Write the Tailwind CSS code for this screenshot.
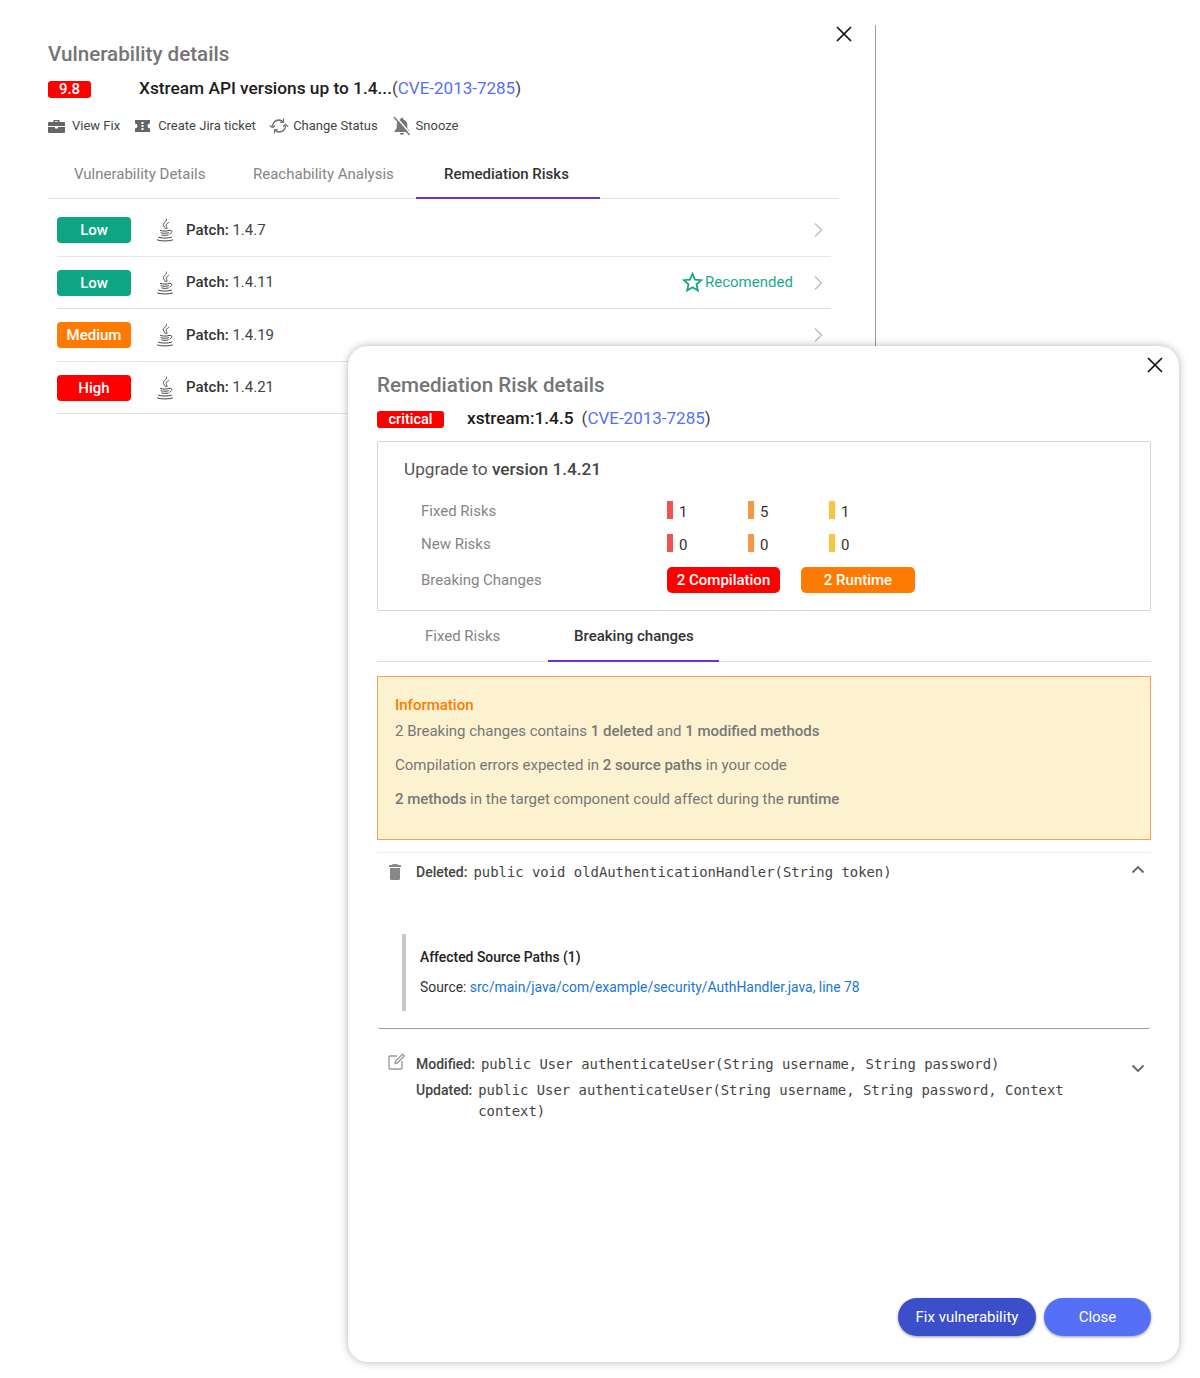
<!DOCTYPE html>
<html lang="en">
<head>
<meta charset="UTF-8">
<title>Remediation Risk details</title>
<script src="https://cdn.jsdelivr.net/npm/@tailwindcss/browser@4"></script>
</head>
<body class="bg-white font-['Roboto',sans-serif]">
<svg class="hidden">
  <symbol id="java" viewBox="4 0 16 24">
    <g fill="none" stroke="#444" stroke-width="1" stroke-linecap="round">
      <path d="M13.500 1c1 2.500-4 4-3 6.500.4 1 1.500 1.700 1.800 3"/>
      <path d="M15.500 4.500c-2 1.200-3 2.600-2 4 .4.600.6 1.300.3 2.200"/>
      <path d="M7.500 12.500c2.500.8 6.500.8 8.500 0M8 14.800c2 .6 5.500.6 7.500 0M8.800 17c2 .5 4.400.5 6.400 0"/>
      <path d="M16.500 12.500c2.800-.8 3.500 1.800 .3 3.500"/>
      <path d="M5.500 19.200c3 1.200 10 1.200 13 0M4.500 22c4 1.300 11 1.300 15 0"/>
    </g>
  </symbol>
</svg>
<div class="relative w-[1200px] h-[1378px] overflow-hidden bg-white">

  <!-- back panel -->
  <div class="relative w-[876px] h-[700px] mt-[25px] border-r border-[#9a9a9a] pl-[48px] pt-[17px]">
    <button class="absolute left-[835px] top-[0px] text-[#111]">
      <svg class="w-[18px] h-[18px]" viewBox="0 0 18 18" fill="none" stroke="currentColor" stroke-width="1.700"><path d="M2 2l14 14M16 2L2 16"/></svg>
    </button>
    <h2 class="text-[20.600px] leading-[24px] font-medium text-[#757575]">Vulnerability details</h2>
    <div class="flex items-center mt-[11px] h-[24px]">
      <span class="w-[43px] h-[17px] rounded-[3px] bg-[#ff0000] text-white text-[15px] leading-[17px] font-medium text-center">9.8</span>
      <span class="ml-[48px] text-[17.300px] font-medium text-[#1c1c1c]">Xstream API versions up to 1.4...</span>
      <span class="text-[17px] text-[#444]">(<span class="text-[#5570f6]">CVE-2013-7285</span>)</span>
    </div>
    <div class="flex items-center mt-[13px] h-[24px] text-[13px] text-[#444] whitespace-nowrap">
      <svg class="w-[17px] h-[14px] mr-[7px]" viewBox="0 0 17 14" fill="#666"><path d="M5.500 3V1h6v2h4.500a1 1 0 0 1 1 1v3H0V4a1 1 0 0 1 1-1zM7 3h3V2.200H7zM0 8h7v1.500h3V8h7v5a1 1 0 0 1-1 1H1a1 1 0 0 1-1-1z"/></svg>
      <span>View Fix</span>
      <svg class="w-[17px] h-[14px] ml-[14px] mr-[7px]" viewBox="0 0 17 14" fill="#666"><path d="M1 1h15v3.500a2.500 2.500 0 0 0 0 5V13H1V9.500a2.500 2.500 0 0 0 0-5zM7.500 3v2h2V3zm0 3v2h2V6zm0 3v2h2V9z" fill-rule="evenodd"/></svg>
      <span class="w-[97px]">Create Jira ticket</span>
      <svg class="w-[20px] h-[18px] ml-[14px] mr-[4px]" viewBox="0 0 20 18" fill="none" stroke="#666" stroke-width="1.300"><path d="M3.500 9c.2-3.500 3-6 6.300-6 1.700 0 3 .6 4.200 1.800M16.500 9c-.2 3.500-3 6-6.300 6-1.700 0-3-.6-4.200-1.800"/><path d="M14.500 1.500v3.800h-3.500M5.500 16.500v-3.800H9M.8 8.500l2.700 2 2.500-2M19.200 9.500l-2.700-2-2.500 2" stroke-width="1.100"/></svg>
      <span>Change Status</span>
      <svg class="w-[18px] h-[20px] ml-[15px] mr-[5px]" viewBox="0 0 18 20" fill="#777"><path d="M9 1.500c.8 0 1.300.6 1.300 1.300v.6c2.500.7 4 2.800 4 5.400v3.500L16.500 15v1h-15v-1l2.200-2.700V8.800c0-1.200.3-2.300 1-3.300zM7 17h4a2 2 0 0 1-4 0z"/><path d="M2.200 0l15.500 18" stroke="#fff" stroke-width="1.500"/><path d="M1 1l15.500 18" stroke="#777" stroke-width="1.400"/></svg>
      <span>Snooze</span>
    </div>
    <div class="flex w-[791px] h-[49px] mt-[12px] border-b border-[#e0e0e0] text-[15px]">
      <div class="w-[183px] pl-[26px] pt-[13px] text-[#858585]">Vulnerability Details</div>
      <div class="w-[185px] pl-[22px] pt-[13px] text-[#858585]">Reachability Analysis</div>
      <div class="w-[184px] h-[49px] border-b-2 border-[#6d2fd8] pl-[28px] pt-[13px] font-medium text-[#333]">Remediation Risks</div>
    </div>
    <div class="ml-[9px] w-[774px] mt-[5px] text-[15px] text-[#444]">
      <div class="flex items-center h-[53px] border-b border-[#e6e6e6]">
        <span class="w-[74px] h-[26px] rounded-[4px] bg-[#0ea585] text-white text-[15px] leading-[26px] font-medium text-center">Low</span>
        <svg class="w-[18px] h-[24px] ml-[25px]"><use href="#java"/></svg>
        <span class="ml-[12px]"><b class="font-medium text-[#333]">Patch:</b> 1.4.7</span>
        <svg class="w-[10px] h-[16px] ml-auto mr-[8px]" viewBox="0 0 10 16" fill="none" stroke="#bdbdbd" stroke-width="1.400"><path d="M2 1.500l6.500 6.500L2 14.500"/></svg>
      </div>
      <div class="flex items-center h-[52px] border-b border-[#e0e0e0]">
        <span class="w-[74px] h-[26px] rounded-[4px] bg-[#0ea585] text-white text-[15px] leading-[26px] font-medium text-center">Low</span>
        <svg class="w-[18px] h-[24px] ml-[25px]"><use href="#java"/></svg>
        <span class="ml-[12px]"><b class="font-medium text-[#333]">Patch:</b> 1.4.11</span>
        <svg class="w-[21px] h-[20px] ml-auto mr-[2px] -mt-[1px]" viewBox="0 0 24 23" fill="none" stroke="#0ea585" stroke-width="2"><path d="M12 2l2.900 6.700 7.100.7-5.400 4.800 1.600 7.100-6.200-3.700-6.200 3.700 1.600-7.100L2 9.400l7.100-.7z"/></svg>
        <span class="text-[#17ab8c] w-[87px] text-right">Recomended</span>
        <svg class="w-[10px] h-[16px] ml-[21px] mr-[8px]" viewBox="0 0 10 16" fill="none" stroke="#bdbdbd" stroke-width="1.400"><path d="M2 1.500l6.500 6.500L2 14.500"/></svg>
      </div>
      <div class="flex items-center h-[53px] border-b border-[#e6e6e6]">
        <span class="w-[74px] h-[26px] rounded-[4px] bg-[#ff7a00] text-white text-[15px] leading-[26px] font-medium text-center">Medium</span>
        <svg class="w-[18px] h-[24px] ml-[25px]"><use href="#java"/></svg>
        <span class="ml-[12px]"><b class="font-medium text-[#333]">Patch:</b> 1.4.19</span>
        <svg class="w-[10px] h-[16px] ml-auto mr-[8px]" viewBox="0 0 10 16" fill="none" stroke="#bdbdbd" stroke-width="1.400"><path d="M2 1.500l6.500 6.500L2 14.500"/></svg>
      </div>
      <div class="flex items-center h-[52px] border-b border-[#e0e0e0]">
        <span class="w-[74px] h-[26px] rounded-[4px] bg-[#ff0000] text-white text-[15px] leading-[26px] font-medium text-center">High</span>
        <svg class="w-[18px] h-[24px] ml-[25px]"><use href="#java"/></svg>
        <span class="ml-[12px]"><b class="font-medium text-[#333]">Patch:</b> 1.4.21</span>
      </div>
    </div>
  </div>

  <!-- remediation modal -->
  <div class="absolute left-[348px] top-[346px] w-[831px] h-[1016px] rounded-[20px] bg-white shadow-[0_0_8px_rgba(0,0,0,0.3)] pl-[29px] pr-[28px] pt-[26px]">
    <button class="absolute right-[15px] top-[10px] text-[#111]">
      <svg class="w-[18px] h-[18px]" viewBox="0 0 18 18" fill="none" stroke="currentColor" stroke-width="1.700"><path d="M2 2l14 14M16 2L2 16"/></svg>
    </button>
    <h2 class="text-[20.600px] leading-[26px] font-medium text-[#757575]">Remediation Risk details</h2>
    <div class="flex items-center mt-[9px] h-[24px]">
      <span class="w-[67px] h-[17px] rounded-[3px] bg-[#ff0000] text-white text-[14.500px] leading-[17px] font-medium text-center">critical</span>
      <span class="ml-[23px] text-[17.300px] font-medium text-[#1c1c1c]">xstream:1.4.5</span>
      <span class="ml-[8px] text-[17px] text-[#444]">(<span class="text-[#5570f6]">CVE-2013-7285</span>)</span>
    </div>
    <div class="mt-[10px] h-[170px] border border-[#d6d6d6] rounded-[2px] pl-[26px] pt-[16px]">
      <div class="text-[17.200px] leading-[22px] text-[#555]">Upgrade to <b class="font-medium text-[#444]">version 1.4.21</b></div>
      <div class="grid grid-cols-[246px_81px_81px_81px] ml-[17px] mt-[21px] text-[15px] text-[#858585] items-center">
        <div class="h-[33px] leading-[20px]">Fixed Risks</div>
        <div class="h-[33px] flex items-start text-[#333]"><span class="w-[6px] h-[18px] mr-[6px] bg-[#ef5350]"></span><span class="leading-[22px]">1</span></div>
        <div class="h-[33px] flex items-start text-[#333]"><span class="w-[6px] h-[18px] mr-[6px] bg-[#f79646]"></span><span class="leading-[22px]">5</span></div>
        <div class="h-[33px] flex items-start text-[#333]"><span class="w-[6px] h-[18px] mr-[6px] bg-[#f9c440]"></span><span class="leading-[22px]">1</span></div>
        <div class="h-[33px] leading-[20px]">New Risks</div>
        <div class="h-[33px] flex items-start text-[#333]"><span class="w-[6px] h-[18px] mr-[6px] bg-[#ef5350]"></span><span class="leading-[22px]">0</span></div>
        <div class="h-[33px] flex items-start text-[#333]"><span class="w-[6px] h-[18px] mr-[6px] bg-[#f79646]"></span><span class="leading-[22px]">0</span></div>
        <div class="h-[33px] flex items-start text-[#333]"><span class="w-[6px] h-[18px] mr-[6px] bg-[#f9c440]"></span><span class="leading-[22px]">0</span></div>
      </div>
      <div class="flex items-center ml-[17px] text-[15px] text-[#858585]">
        <div class="w-[246px]">Breaking Changes</div>
        <span class="w-[113px] h-[26px] rounded-[5px] bg-[#ff0000] text-white leading-[26px] font-medium text-center">2 Compilation</span>
        <span class="ml-[21px] w-[114px] h-[26px] rounded-[5px] bg-[#ff7a00] text-white leading-[26px] font-medium text-center">2 Runtime</span>
      </div>
    </div>
    <div class="flex h-[51px] border-b border-[#e0e0e0] text-[15px]">
      <div class="w-[171px] pl-[48px] pt-[14px] text-[#858585]">Fixed Risks</div>
      <div class="w-[171px] h-[51px] border-b-2 border-[#6d2fd8] pl-[26px] pt-[14px] font-medium text-[#333]">Breaking changes</div>
    </div>
    <div class="mt-[14px] h-[164px] border border-[#f5a05a] bg-[#fdf2d0] pl-[17px] pt-[18px] text-[15px] text-[#777]">
      <div class="font-medium text-[#ff7a00] leading-[20px]">Information</div>
      <p class="mt-[6px] leading-[20px]">2 Breaking changes contains <b class="font-medium">1 deleted</b> and <b class="font-medium">1 modified methods</b></p>
      <p class="mt-[14px] leading-[20px]">Compilation errors expected in <b class="font-medium">2 source paths</b> in your code</p>
      <p class="mt-[14px] leading-[20px]"><b class="font-medium">2 methods</b> in the target component could affect during the <b class="font-medium">runtime</b></p>
    </div>

    <div class="mt-[12px] h-[176px] border-t border-[#ececec] rounded-b-[3px] shadow-[0_2px_1px_-1px_rgba(0,0,0,0.4)]">
      <div class="flex items-start pt-[9px] pl-[12px] pr-[6px] h-[81px]">
        <svg class="w-[12px] h-[16px] mt-[2px]" viewBox="0 0 12 16" fill="#888"><path d="M4 0h4l1 1h3v2H0V1h3zM1 4h10v10.500A1.500 1.500 0 0 1 9.500 16h-7A1.500 1.500 0 0 1 1 14.500z"/></svg>
        <span class="ml-[15px] text-[14px] leading-[20px] font-medium text-[#444]">Deleted:</span>
        <code class="ml-[6px] text-[13.900px] leading-[20px] text-[#444] font-['DejaVu_Sans_Mono',monospace]">public void oldAuthenticationHandler(String token)</code>
        <svg class="w-[14px] h-[9px] ml-auto mt-[3px]" viewBox="0 0 14 9" fill="none" stroke="#666" stroke-width="1.800"><path d="M1.500 7.500L7 2l5.500 5.500"/></svg>
      </div>
      <div class="ml-[25px] h-[77px] border-l-4 border-[#c8c8c8] pl-[14px] pt-[13px] text-[13.900px] text-[#333]">
        <div class="font-medium leading-[20px] text-[#222]">Affected Source Paths (1)</div>
        <div class="mt-[10px] leading-[20px]">Source: <span class="text-[#1976d2]">src/main/java/com/example/security/AuthHandler.java, line 78</span></div>
      </div>
    </div>

    <div class="h-[103px] border-b border-dotted border-[#fafafa] flex items-start pt-[26px] pl-[11px] pr-[6px]">
      <svg class="w-[17px] h-[17px] flex-none -mt-[1px]" viewBox="0 0 17 17" fill="none" stroke="#999" stroke-width="1.300"><path d="M9 3H2a1 1 0 0 0-1 1v11a1 1 0 0 0 1 1h11a1 1 0 0 0 1-1V8"/><path d="M7 10.500l.7-2.500L14.500 1.200l1.800 1.800-6.800 6.800z"/></svg>
      <div class="ml-[11px] flex-1">
        <div class="flex text-[14px] leading-[20px]">
          <span class="font-medium text-[#444] mr-[6px]">Modified:</span>
          <code class="text-[13.900px] text-[#444] font-['DejaVu_Sans_Mono',monospace]">public User authenticateUser(String username, String password)</code>
        </div>
        <div class="flex text-[14px] leading-[21px] mt-[6px]">
          <span class="font-medium text-[#444] mr-[6px] flex-none">Updated:</span>
          <code class="w-[600px] text-[13.900px] text-[#444] font-['DejaVu_Sans_Mono',monospace]">public User authenticateUser(String username, String password, Context context)</code>
        </div>
      </div>
      <svg class="w-[14px] h-[9px] mt-[10px] flex-none" viewBox="0 0 14 9" fill="none" stroke="#666" stroke-width="1.800"><path d="M1.500 1.500L7 7l5.500-5.500"/></svg>
    </div>

    <div class="absolute right-[28px] bottom-[26px] flex gap-[8px] text-[15px] text-white">
      <button class="w-[138px] h-[38px] pt-[1px] rounded-[19px] bg-[#3a4fc9] shadow-[0_1px_3px_rgba(0,0,0,0.4)]">Fix vulnerability</button>
      <button class="w-[107px] h-[38px] pt-[1px] rounded-[19px] bg-[#5570f6] shadow-[0_1px_3px_rgba(0,0,0,0.4)]">Close</button>
    </div>
  </div>
</div>
</body>
</html>
